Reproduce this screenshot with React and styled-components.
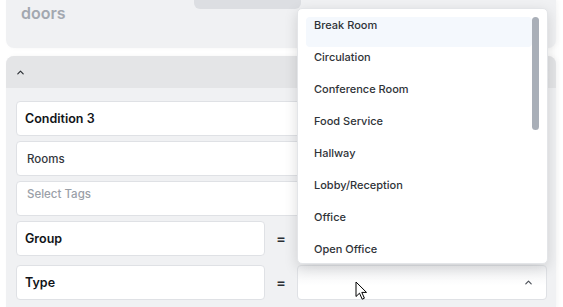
import React from "react";
import styled, { createGlobalStyle } from "styled-components";

const Global = createGlobalStyle`
  html, body { margin: 0; padding: 0; background: #ffffff; }
  body { font-family: Inter, "Noto Sans", sans-serif; overflow: hidden; }
  * { box-sizing: border-box; }
`;

const Page = styled.div`
  width: 563px;
  height: 307px;
  padding-left: 6px;
  position: relative;
  overflow: hidden;
`;

const TopCard = styled.div`
  position: relative;
  width: 550px;
  height: 48px;
  background: #f0f1f3;
  border-radius: 0 0 8px 8px;
  padding: 3px 15px 0;
  box-shadow: 2px 0 5px rgba(0, 0, 0, 0.04);
`;

const CutTab = styled.div`
  position: absolute;
  top: 0;
  left: 188px;
  width: 107px;
  height: 9px;
  background: #dcdee2;
  border-radius: 0 0 6px 6px;
`;

const Title = styled.div`
  font-size: 16px;
  line-height: 20px;
  font-weight: 600;
  color: #a3a8b0;
`;

const Card = styled.div`
  width: 550px;
  margin-top: 8px;
  background: #f0f1f3;
  border-radius: 8px 8px 0 0;
  box-shadow: 2px 0 5px rgba(0, 0, 0, 0.04);
`;

const Header = styled.div`
  height: 32px;
  background: #e4e5e7;
  border-radius: 8px 8px 0 0;
  display: flex;
  align-items: center;
  justify-content: space-between;
  padding: 0 5px 0 10px;
`;

const Body = styled.div`
  display: flex;
  flex-direction: column;
  padding: 13px 9px 10px 10px;
`;

const Field = styled.div`
  height: 35px;
  background: #ffffff;
  border: 1px solid #dfe1e5;
  border-radius: 4px;
  display: flex;
  align-items: ${(p) => (p.$top ? "flex-start" : "center")};
  padding: ${(p) => (p.$top ? "5px 10px 0" : p.$bold ? "0 8px" : "0 10px")};
  margin-top: ${(p) => p.$mt || 0}px;
  font-size: ${(p) => (p.$bold ? "12.5px" : "11.5px")};
  font-weight: ${(p) => (p.$bold ? 600 : 500)};
  color: ${(p) => (p.$placeholder ? "#9aa0a8" : p.$bold ? "#111418" : "#33373d")};
  position: relative;
`;

const Row = styled.div`
  display: grid;
  grid-template-columns: 249px 32px 250px;
  margin-top: ${(p) => p.$mt}px;
`;

const Eq = styled.div`
  display: flex;
  align-items: center;
  justify-content: center;
  font-size: 15px;
  color: #2b2f35;
  font-weight: 500;
`;

const SelectBox = styled.div`
  position: relative;
  height: 35px;
  background: ${(p) => (p.$open ? "linear-gradient(180deg, #f1f2f4 0%, #ffffff 60%)" : "#ffffff")};
  border: 1px solid #dfe1e5;
  border-radius: 4px;
  display: flex;
  align-items: center;
  justify-content: flex-end;
  padding-right: 13px;
`;

const Dropdown = styled.div`
  position: absolute;
  left: -1px;
  bottom: calc(100% + 2px);
  width: 251px;
  height: 256px;
  background: #ffffff;
  border: 1px solid #e3e5e8;
  border-radius: 5px;
  box-shadow: 0 4px 14px rgba(0, 0, 0, 0.14);
  overflow: hidden;
  padding: 8px 15px 0 8px;
  z-index: 5;
`;

const Item = styled.div`
  height: 30px;
  margin-bottom: 2px;
  padding: 0 8px;
  font-size: 11px;
  line-height: 16px;
  font-weight: 450;
  color: #2f3338;
  border-radius: 4px;
  background: ${(p) => (p.$active ? "#f4f8fd" : "transparent")};
`;

const Thumb = styled.div`
  position: absolute;
  right: 8px;
  top: 8px;
  width: 7px;
  height: 113px;
  border-radius: 4px;
  background: #a9afb8;
`;

const Cursor = styled.svg`
  position: absolute;
  left: 355px;
  top: 281px;
  z-index: 10;
`;

const Chevron = ({ color = "#2a2e33", size = 9 }) => (
  <svg width={size} height={size} viewBox="0 0 10 10" fill="none">
    <path d="M2 6.5 L5 3.5 L8 6.5" stroke={color} strokeWidth="1.3" strokeLinecap="round" strokeLinejoin="round" />
  </svg>
);

const Dots = () => (
  <svg width="6" height="24" viewBox="0 0 6 24">
    <circle cx="2" cy="10" r="1.1" fill="#3a6fd8" />
    <circle cx="2" cy="19" r="1.1" fill="#3a6fd8" />
  </svg>
);

const options = [
  "Break Room",
  "Circulation",
  "Conference Room",
  "Food Service",
  "Hallway",
  "Lobby/Reception",
  "Office",
  "Open Office",
];

export default function App() {
  return (
    <Page>
      <Global />
      <TopCard>
        <CutTab />
        <Title>doors</Title>
      </TopCard>
      <Card>
        <Header>
          <Chevron />
          <Dots />
        </Header>
        <Body>
          <Field $bold>Condition 3</Field>
          <Field $mt={5}>Rooms</Field>
          <Field $mt={5} $top $placeholder>Select Tags</Field>
          <Row $mt={5}>
            <Field $bold>Group</Field>
            <Eq>=</Eq>
            <SelectBox />
          </Row>
          <Row $mt={9}>
            <Field $bold>Type</Field>
            <Eq>=</Eq>
            <SelectBox $open>
              <Chevron color="#4a4f56" size={9} />
              <Dropdown>
                {options.map((o, i) => (
                  <Item key={o} $active={i === 0}>{o}</Item>
                ))}
                <Thumb />
              </Dropdown>
            </SelectBox>
          </Row>
        </Body>
      </Card>
      <Cursor width="14" height="20" viewBox="0 0 14 20">
        <path d="M1 1 L1 15.5 L4.5 12.2 L7.2 18.2 L9.4 17.2 L6.8 11.4 L11.5 11.4 Z" fill="#ffffff" stroke="#000000" strokeWidth="1" strokeLinejoin="round" />
      </Cursor>
    </Page>
  );
}
